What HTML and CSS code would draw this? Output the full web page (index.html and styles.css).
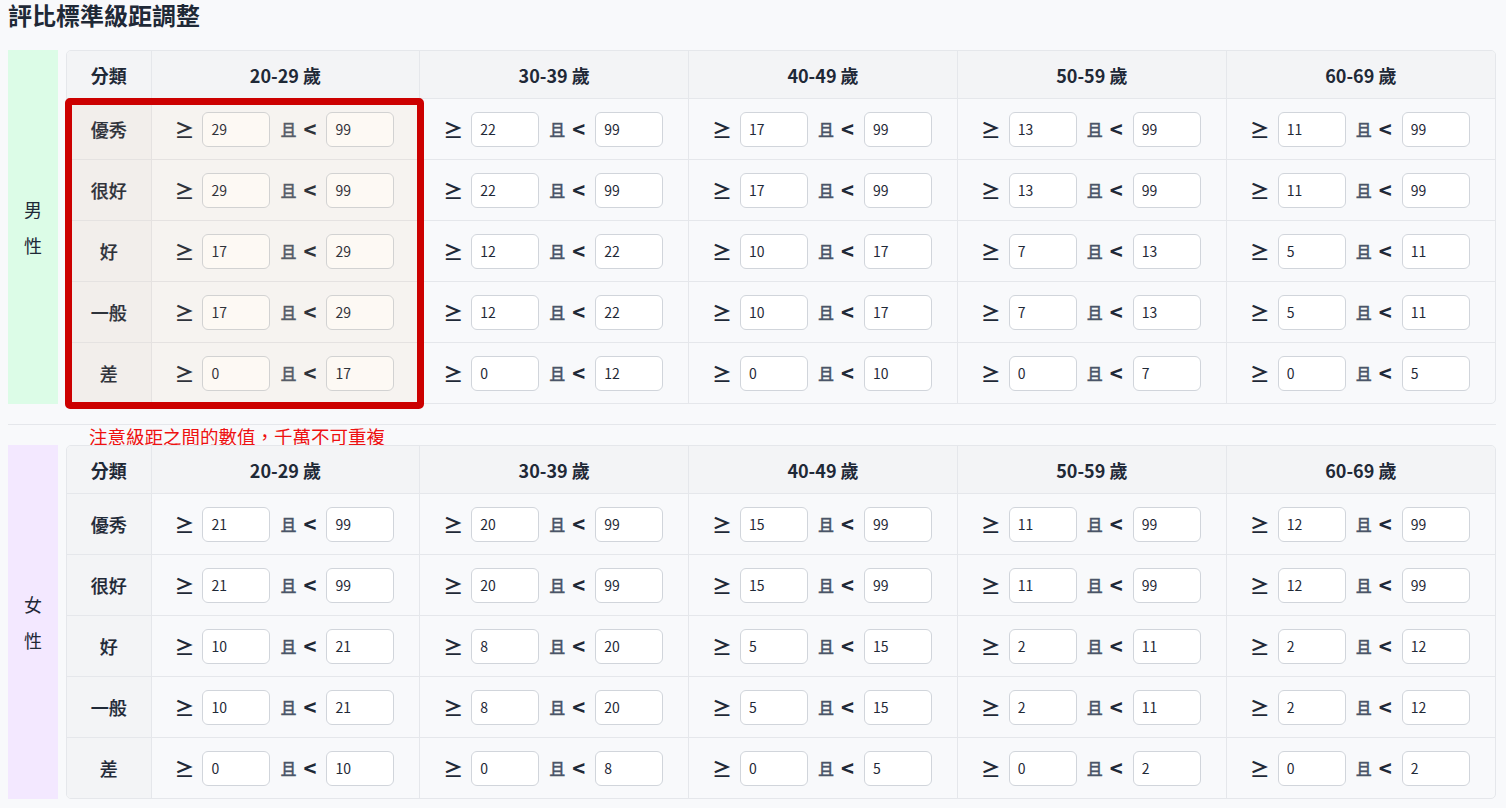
FILE: index.html
```html
<!DOCTYPE html>
<html lang="zh-Hant">

<head>
    <meta charset="UTF-8">
    <meta name="viewport" content="width=device-width, initial-scale=1.0">
    <title>評比標準級距調整</title>
    <link rel="stylesheet" href="styles.css">
</head>

<body>
    <div class="page">
        <h2 class="title">評比標準級距調整</h2>

        <div class="section" id="male">
            <div class="gender male"><span>男</span><span>性</span></div>
            <div class="table-wrap"></div>
            <div class="mark-box"></div>
        </div>

        <div class="divider">
            <p class="note">注意級距之間的數值，千萬不可重複</p>
        </div>

        <div class="section" id="female">
            <div class="gender female"><span>女</span><span>性</span></div>
            <div class="table-wrap"></div>
        </div>
    </div>

    <script>
        var ages = ['20-29 歲', '30-39 歲', '40-49 歲', '50-59 歲', '60-69 歲'];
        var levels = ['優秀', '很好', '好', '一般', '差'];

        // 每一列 = 一個分類, 每格 = [下限, 上限]
        var data = {
            male: [
                [[29, 99], [22, 99], [17, 99], [13, 99], [11, 99]],
                [[29, 99], [22, 99], [17, 99], [13, 99], [11, 99]],
                [[17, 29], [12, 22], [10, 17], [7, 13], [5, 11]],
                [[17, 29], [12, 22], [10, 17], [7, 13], [5, 11]],
                [[0, 17], [0, 12], [0, 10], [0, 7], [0, 5]]
            ],
            female: [
                [[21, 99], [20, 99], [15, 99], [11, 99], [12, 99]],
                [[21, 99], [20, 99], [15, 99], [11, 99], [12, 99]],
                [[10, 21], [8, 20], [5, 15], [2, 11], [2, 12]],
                [[10, 21], [8, 20], [5, 15], [2, 11], [2, 12]],
                [[0, 10], [0, 8], [0, 5], [0, 2], [0, 2]]
            ]
        };

        function buildTable(rows) {
            var html = '<table class="grade"><colgroup><col class="col-cat">';
            for (var a = 0; a < ages.length; a++) html += '<col>';
            html += '</colgroup><thead><tr><th>分類</th>';
            for (var a = 0; a < ages.length; a++) html += '<th>' + ages[a] + '</th>';
            html += '</tr></thead><tbody>';
            for (var r = 0; r < levels.length; r++) {
                html += '<tr><td class="cat">' + levels[r] + '</td>';
                for (var c = 0; c < ages.length; c++) {
                    html += '<td><div class="range">' +
                        '<span class="ge">≥</span>' +
                        '<input type="text" value="' + rows[r][c][0] + '">' +
                        '<span class="and">且</span><span class="lt">&lt;</span>' +
                        '<input type="text" value="' + rows[r][c][1] + '">' +
                        '</div></td>';
                }
                html += '</tr>';
            }
            html += '</tbody></table>';
            return html;
        }

        document.querySelector('#male .table-wrap').innerHTML = buildTable(data.male);
        document.querySelector('#female .table-wrap').innerHTML = buildTable(data.female);
    </script>
</body>

</html>
```

FILE: styles.css
```css
body {
    margin: 0;
    background-color: #f8f9fb;
    font-family: "Noto Sans CJK TC", "Noto Sans", sans-serif;
    color: #1f2937;
}

.page {
    position: relative;
    padding: 0 10px 10px 8px;
}

.title {
    margin: 0 0 20px;
    font-size: 24px;
    font-weight: 700;
    line-height: 30px;
    color: #1f2937;
}

.section {
    position: relative;
    display: flex;
    gap: 8px;
}

.gender {
    width: 50px;
    flex: none;
    display: flex;
    flex-direction: column;
    align-items: center;
    justify-content: center;
    font-size: 18px;
    line-height: 36px;
    color: #1f2937;
}

.gender.male {
    background-color: #dcfce7;
}

.gender.female {
    background-color: #f3e8ff;
}

.table-wrap {
    flex: 1;
    border: 1px solid #e5e7eb;
    border-radius: 5px;
    overflow: hidden;
}

table.grade {
    width: 100%;
    border-collapse: collapse;
    table-layout: fixed;
}

col.col-cat {
    width: 84px;
}

.grade th {
    height: 47px;
    padding: 0;
    line-height: 20px;
    background-color: #f3f4f6;
    font-size: 18px;
    font-weight: 700;
    border-left: 1px solid #e5e7eb;
    border-bottom: 1px solid #e5e7eb;
}

.grade td {
    height: 60px;
    padding: 0;
    border-left: 1px solid #e5e7eb;
    border-top: 1px solid #e5e7eb;
}

.grade tr > :first-child {
    border-left: none;
}

.grade td.cat {
    background-color: #f3f4f6;
    text-align: center;
    font-size: 18px;
    font-weight: 500;
    -webkit-text-stroke: 0.2px #1f2937;
}

.grade tbody tr:first-child td {
    border-top: none;
}

.range {
    display: flex;
    align-items: center;
    justify-content: center;
    padding-right: 2px;
}

.ge {
    font-size: 20px;
    font-weight: 700;
    margin-right: 8px;
}

.and {
    font-size: 16px;
    font-weight: 500;
    color: #4a5568;
    -webkit-text-stroke: 0.3px #4a5568;
    margin-left: 10px;
}

.lt {
    font-size: 22px;
    font-weight: 700;
    line-height: 1;
    margin-left: 7px;
    margin-right: 10px;
    padding-bottom: 2px;
}

.range input {
    width: 68px;
    height: 35px;
    box-sizing: border-box;
    padding: 0 8px;
    border: 1px solid #d1d5db;
    border-radius: 6px;
    background-color: #ffffff;
    font-family: "Noto Sans CJK TC", "Noto Sans", sans-serif;
    font-size: 14px;
    color: #1f2937;
}

/* 標示框 (註記) */
.mark-box {
    position: absolute;
    left: 57px;
    top: 48px;
    width: 359px;
    height: 311px;
    box-sizing: border-box;
    border: 7px solid #cc0000;
    border-radius: 5px;
    background-color: rgba(230, 180, 110, 0.08);
    pointer-events: none;
}

.divider {
    position: relative;
    margin: 20px 0;
    border-top: 1px solid #e5e7eb;
}

.note {
    position: absolute;
    left: 81px;
    top: 0;
    margin: 0;
    font-size: 18.5px;
    line-height: 22px;
    color: #ee1111;
}
```
